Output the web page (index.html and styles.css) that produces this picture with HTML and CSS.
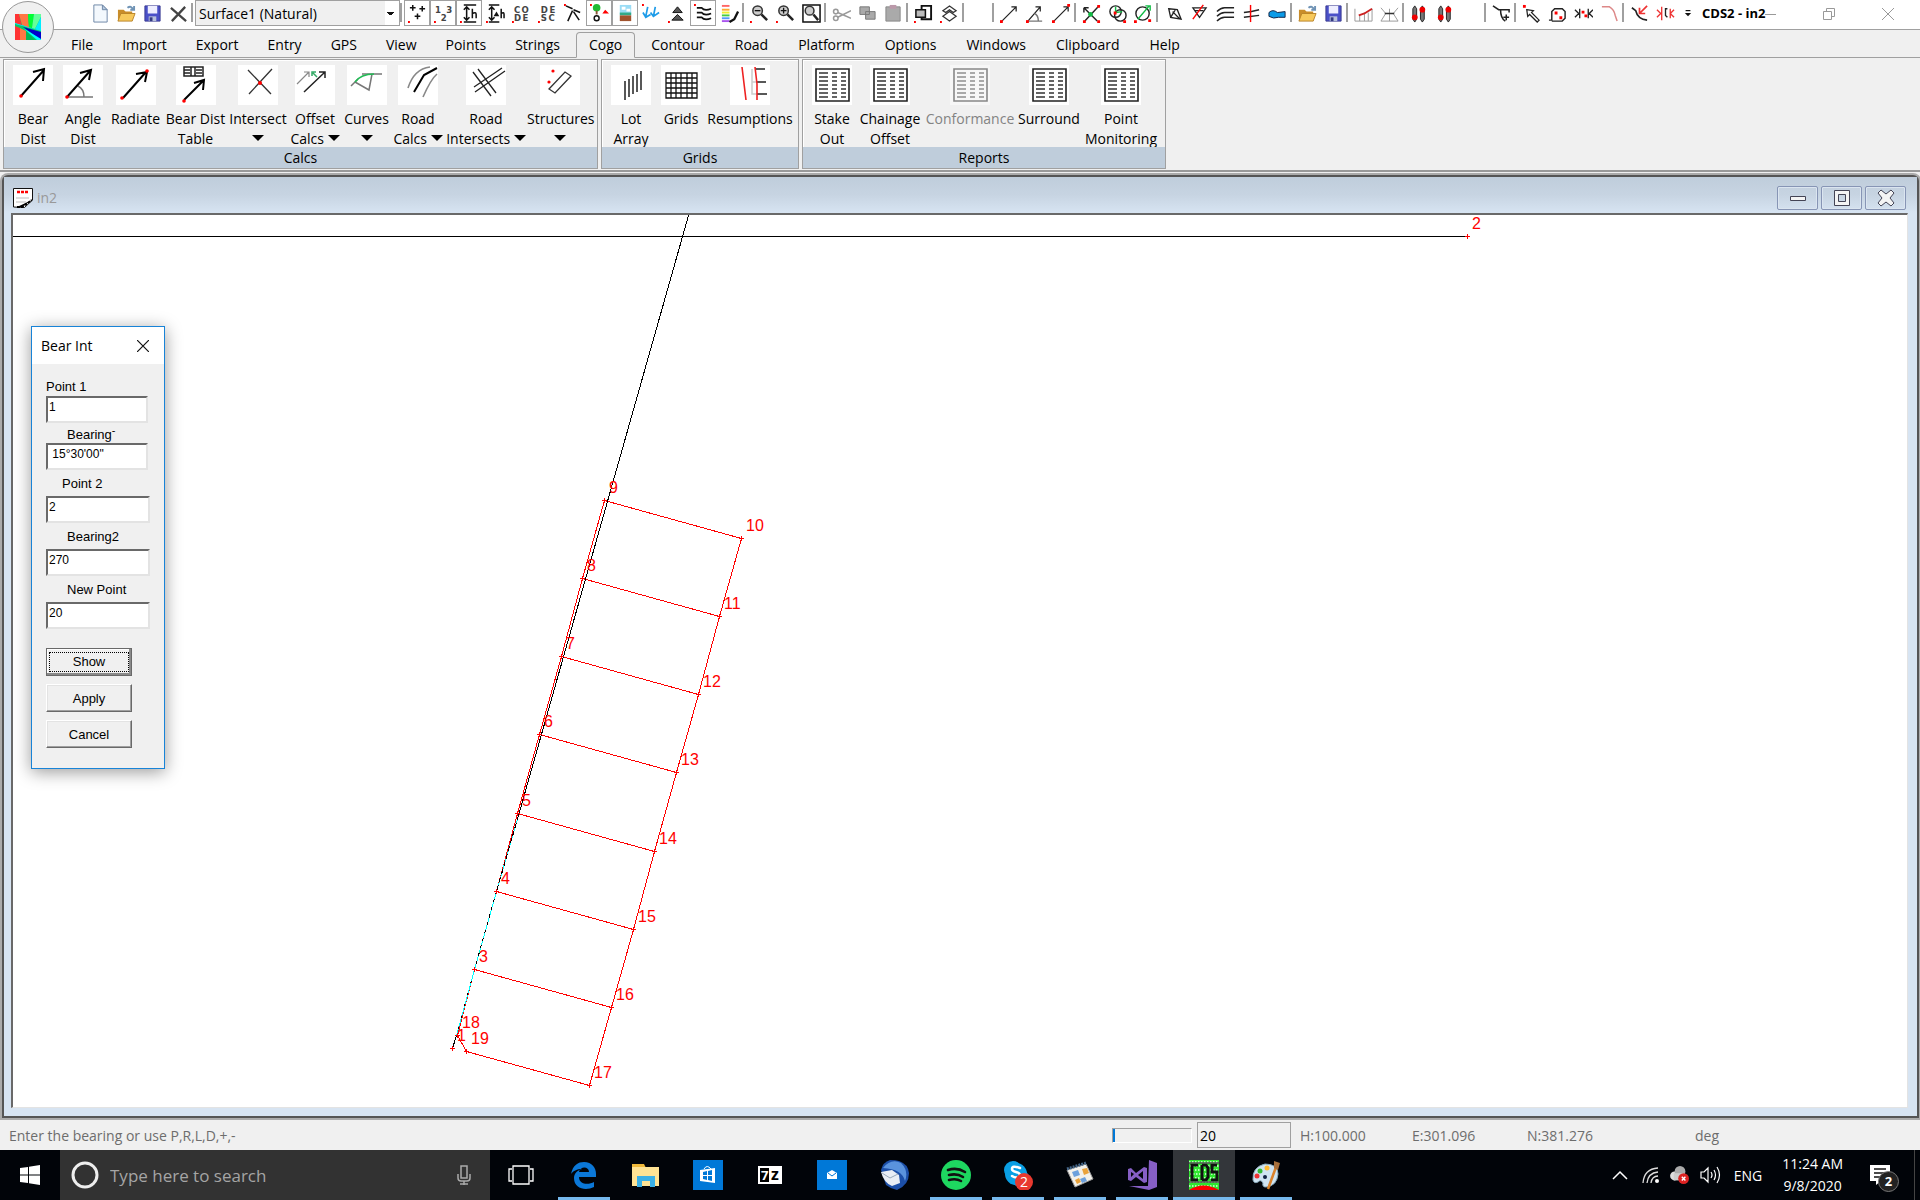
FILE: index.html
```
<!DOCTYPE html>
<html lang="en">
<head>
  <meta charset="UTF-8">
  <title>CDS2 - in2</title>
  <link rel="stylesheet" href="styles.css">
</head>
<body>

  <svg class="defs" aria-hidden="true">
    <symbol id="report" viewBox="0 0 40 40">
      <path fill="#fff" d="M0 0h40v40H0z"/>
      <path fill="none" stroke="#222" stroke-width="1.600" d="M4 4h33v32H4z"/>
      <path stroke="#333" stroke-width="1.400" stroke-dasharray="9 4 5 4 5 9" d="M7 8h29M7 12h29M7 16h29M7 20h29M7 24h29M7 28h29M7 32h29"/>
    </symbol>
    <symbol id="folder" viewBox="0 0 20 20">
      <path fill="#c98d2a" d="M1 6h6l2 2h7v10H1z"/>
      <path fill="#f7c95c" stroke="#b98428" d="M4 10h15l-3 8H1z"/>
      <path fill="none" stroke="#6f93b5" stroke-width="2" d="M11 4q4-3 6 2M14 6h4V2"/>
    </symbol>
    <symbol id="disk" viewBox="0 0 20 20">
      <path fill="#4a50c8" stroke="#3a3a90" d="M2 2h16v16H2z"/>
      <path fill="#eef" d="M5 2h10v8H5z"/>
      <path fill="#b8c0dc" d="M6 13h8v5H6z"/>
      <path fill="#333a80" d="M7 14h3v4H7z"/>
    </symbol>
    <symbol id="sliders" viewBox="0 0 20 20">
      <path fill="#777" stroke="#222" d="M5 2l2 3v11l-2 3-2-3V5zM13 2l2 3v11l-2 3-2-3V5z"/>
      <circle fill="#e00" cx="5" cy="14" r="3"/>
      <circle fill="#e00" cx="13" cy="6" r="3"/>
    </symbol>
  </svg>

  <header class="titlebar">
    <div class="toolbar">
      <button class="tb" aria-label="New"><svg viewBox="0 0 20 20"><path fill="#f3f8fd" stroke="#6d86a5" d="M3 1h9l5 5v13H3z"/><path fill="#b9cbe0" stroke="#6d86a5" d="M12 1v5h5z"/></svg></button>
      <button class="tb" aria-label="Open"><svg><use href="#folder"/></svg></button>
      <button class="tb" aria-label="Save"><svg><use href="#disk"/></svg></button>
      <button class="tb" aria-label="Delete"><svg viewBox="0 0 20 20"><path stroke="#444" stroke-width="2.4" d="M2 4l16 14M17 3L3 18"/></svg></button>
      <span class="sep"></span>
      <select class="surface" aria-label="Surface"><option>Surface1 (Natural)</option></select>
      <span class="sep"></span>
      <button class="tb on" aria-label="Points"><svg viewBox="0 0 20 20"><path stroke="#111" stroke-width="1.6" d="M5 1v6M2 4h6M15 2v6M12 5h6M10 10v6M7 13h6"/><path fill="red" d="M0 18h2v2H0z"/></svg></button>
      <button class="tb on" aria-label="Point numbers"><svg viewBox="0 0 20 20"><text x="1" y="9" class="tiny">1</text><text x="13" y="9" class="tiny">3</text><text x="7" y="18" class="tiny">2</text><path fill="red" d="M0 18h2v2H0z"/></svg></button>
      <button class="tb on" aria-label="Heights"><svg viewBox="0 0 20 20"><path fill="none" stroke="#111" stroke-width="1.6" d="M4 1h13M4 19h13M7 3v14M4 6l3-3 3 3M4 14l3 3 3-3M13 5v10M13 10q4-2 4 1v4"/><path fill="red" d="M0 18h2v2H0z"/></svg></button>
      <button class="tb" aria-label="Height difference"><svg viewBox="0 0 20 20"><path fill="none" stroke="#111" stroke-width="1.6" d="M3 1h11M3 19h11M6 3v14M3 6l3-3 3 3M3 14l3 3 3-3M16 5v10M16 10q3-2 3 1v4"/><path fill="#111" d="M8 13l3-5 3 5z"/><path fill="red" d="M0 18h2v2H0z"/></svg></button>
      <button class="tb" aria-label="Codes"><svg viewBox="0 0 20 20"><text x="2" y="9" class="tiny">C</text><text x="10" y="9" class="tiny">O</text><text x="2" y="18" class="tiny">D</text><text x="11" y="18" class="tiny">E</text><path fill="red" d="M0 18h2v2H0z"/></svg></button>
      <button class="tb" aria-label="Descriptions"><svg viewBox="0 0 20 20"><text x="3" y="9" class="tiny">D</text><text x="12" y="9" class="tiny">E</text><text x="3" y="18" class="tiny">S</text><text x="11" y="18" class="tiny">C</text><path fill="red" d="M0 18h2v2H0z"/></svg></button>
      <button class="tb" aria-label="Strings"><svg viewBox="0 0 20 20"><path fill="none" stroke="#111" stroke-width="1.6" d="M2 2l7 3M10 6l7 3M9 7L4 18M10 8l6 9"/><path fill="red" d="M0 0h2v2H0z"/></svg></button>
      <button class="tb on" aria-label="Symbols"><svg viewBox="0 0 20 20"><circle cx="7" cy="4" r="4" fill="#2b3"/><path stroke="#853" stroke-width="2" d="M7 7v4"/><path fill="red" d="M16 6l4 4h-7zM0 0h2v2H0z"/><circle cx="7" cy="15" r="2.6" fill="none" stroke="#111" stroke-width="1.5"/></svg></button>
      <button class="tb on" aria-label="Images"><svg viewBox="0 0 20 20"><path fill="#9adcf5" d="M4 1h12v10H4z"/><path fill="#fff" d="M6 3h4v3H6zM11 5h4v3h-4z"/><path fill="#3a8" d="M4 9h12v3H4z"/><path fill="#a0522d" d="M4 12h12v6H4z"/></svg></button>
      <button class="tb" aria-label="Drainage"><svg viewBox="0 0 20 20"><path fill="none" stroke="#1d9be8" stroke-width="1.8" d="M6 3l-2 10M1 9l3 5 5-3M14 3l-2 10M9 9l3 4 6-4"/><path fill="red" d="M0 0h2v2H0z"/></svg></button>
      <button class="tb" aria-label="Slopes"><svg viewBox="0 0 20 20"><path fill="#555" stroke="#111" d="M10 3l5 6H5zM10 11l6 6H4z"/><path fill="red" d="M0 18h2v2H0z"/></svg></button>
      <button class="tb on" aria-label="Contours"><svg viewBox="0 0 20 20"><path fill="none" stroke="#111" stroke-width="1.8" d="M3 4h5q3 4 10 1M3 9h5q3 4 10 1M3 14h5q3 4 10 1"/><path fill="red" d="M0 0h2v2H0z"/></svg></button>
      <button class="tb" aria-label="Colours"><svg viewBox="0 0 20 20"><path stroke="#f66" stroke-width="2" d="M2 2h8"/><path stroke="#fa3" stroke-width="2" d="M2 6h8"/><path stroke="#ee3" stroke-width="2" d="M2 9h8"/><path stroke="#4c4" stroke-width="2" d="M2 12h8"/><path stroke="#59f" stroke-width="2" d="M2 15h8"/><path stroke="#a5e" stroke-width="2" d="M2 18h8"/><path fill="none" stroke="#111" stroke-width="2.4" d="M19 8l-4 8-5 3"/></svg></button>
      <span class="sep"></span>
      <button class="tb" aria-label="Zoom out"><svg viewBox="0 0 20 20"><circle cx="8" cy="7" r="5" fill="#ccc" stroke="#333" stroke-width="1.6"/><path stroke="#222" stroke-width="2.6" d="M12 11l6 6"/><path stroke="#111" stroke-width="1.4" d="M5 7h6"/><path fill="red" d="M0 18h2v2H0z"/></svg></button>
      <button class="tb" aria-label="Zoom in"><svg viewBox="0 0 20 20"><circle cx="8" cy="7" r="5" fill="#ccc" stroke="#333" stroke-width="1.6"/><path stroke="#222" stroke-width="2.6" d="M12 11l6 6"/><path stroke="#111" stroke-width="1.4" d="M5 7h6M8 4v6"/><path fill="red" d="M0 18h2v2H0z"/></svg></button>
      <button class="tb" aria-label="Zoom window"><svg viewBox="0 0 20 20"><path fill="#fff" stroke="#111" stroke-width="1.6" d="M1 1h18v18H1z"/><circle cx="8" cy="7" r="4.6" fill="#ccc" stroke="#333" stroke-width="1.6"/><path stroke="#222" stroke-width="2.6" d="M12 11l5 6"/></svg></button>
      <span class="sep"></span>
      <button class="tb" aria-label="Cut"><svg viewBox="0 0 20 20"><path fill="none" stroke="#999" stroke-width="1.6" d="M20 7L6 14M20 15L6 9"/><circle cx="4" cy="8" r="2.4" fill="none" stroke="#999" stroke-width="1.6"/><circle cx="4" cy="15" r="2.4" fill="none" stroke="#999" stroke-width="1.6"/></svg></button>
      <button class="tb" aria-label="Copy"><svg viewBox="0 0 20 20"><path fill="#aaa" stroke="#777" d="M2 3h10v8H2zM8 8h10v8H8z"/></svg></button>
      <button class="tb" aria-label="Paste"><svg viewBox="0 0 20 20"><path fill="#aaa" stroke="#888" d="M2 3h15v15H2z"/><path fill="#b9a" d="M6 1h7v4H6z"/></svg></button>
      <span class="sep"></span>
      <button class="tb" aria-label="Bring to front"><svg viewBox="0 0 20 20"><path fill="none" stroke="#111" stroke-width="2" d="M8 2h10v14H8z"/><path fill="#bbb" stroke="#111" stroke-width="1.6" d="M2 6h10v8H2z"/><path fill="red" d="M0 18h2v2H0z"/></svg></button>
      <button class="tb" aria-label="Layers"><svg viewBox="0 0 20 20"><path fill="#fff" stroke="#333" stroke-width="1.3" d="M10 8l7 5-7 5-7-5zM10 2l7 5-3 2-4-3-4 3-3-2z"/><path fill="red" d="M0 18h2v2H0z"/></svg></button>
      <span class="sep"></span>
      <span class="spacer"></span>
      <span class="sep"></span>
      <button class="tb" aria-label="Bearing distance"><svg viewBox="0 0 20 20"><path fill="none" stroke="#222" stroke-width="1.3" d="M2 18L17 3M12 3h5v5"/><path fill="red" d="M0 17h3v3H0z"/></svg></button>
      <button class="tb" aria-label="Angle distance"><svg viewBox="0 0 20 20"><path fill="none" stroke="#222" stroke-width="1.3" d="M2 18L15 3M10 3h5v5"/><path fill="none" stroke="#777" stroke-width="1.5" d="M2 18h15M9 10q4 2 4 8"/><path fill="red" d="M0 17h3v3H0z"/></svg></button>
      <button class="tb" aria-label="Radiate"><svg viewBox="0 0 20 20"><path fill="none" stroke="#222" stroke-width="1.3" d="M2 18L17 3M12 3h5v5"/><path fill="red" d="M0 17h3v3H0zM16 0h3v3h-3z"/></svg></button>
      <span class="sep"></span>
      <button class="tb" aria-label="Line intersection"><svg viewBox="0 0 20 20"><path stroke="#222" stroke-width="1.5" d="M3 18L17 3M2 4l14 14M2 4h5M2 4v5"/><path fill="red" d="M16 1h3v3h-3zM16 17h3v3h-3zM1 17h3v3H1z"/><circle cx="9" cy="11" r="2.5" fill="#1b4"/></svg></button>
      <button class="tb" aria-label="Circle intersection"><svg viewBox="0 0 20 20"><g fill="none" stroke="#222" stroke-width="1.5"><circle cx="8" cy="8" r="6"/><circle cx="13" cy="12" r="6"/></g><path stroke="#1b4" stroke-width="1.5" d="M8 9V3M8 9l7-1"/><path fill="red" d="M6 8h3v3H6zM16 17h3v3h-3z"/></svg></button>
      <button class="tb" aria-label="Line circle intersection"><svg viewBox="0 0 20 20"><circle cx="9" cy="10" r="7" fill="none" stroke="#222" stroke-width="1.5"/><path fill="none" stroke="#1b4" stroke-width="1.5" d="M4 16L16 2M12 2h5v5"/><path fill="red" d="M0 17h3v3H0zM15 16h3v3h-3z"/></svg></button>
      <span class="sep"></span>
      <button class="tb" aria-label="Parcel"><svg viewBox="0 0 20 20"><path fill="none" stroke="#222" stroke-width="1.4" d="M5 5l9 1 4 10-11-2zM7 14l5-8M9 8l8 8"/></svg></button>
      <button class="tb" aria-label="Remove parcel"><svg viewBox="0 0 20 20"><path fill="none" stroke="#222" stroke-width="1.3" d="M3 4h14l-7 10zM5 7h9"/><path stroke="red" stroke-width="1.5" d="M3 16L14 1"/></svg></button>
      <button class="tb" aria-label="Offsets"><svg viewBox="0 0 20 20"><path fill="none" stroke="#222" stroke-width="1.5" d="M1 8q4-4 8-4h10M1 13q4-4 8-4h10M1 18q4-4 8-4h10"/></svg></button>
      <button class="tb" aria-label="Intersect roads"><svg viewBox="0 0 20 20"><path fill="none" stroke="#222" stroke-width="1.5" d="M2 9q8-1 16-3M2 14q8-1 16-2"/><path stroke="red" stroke-width="1.5" d="M9 1v18"/></svg></button>
      <button class="tb" aria-label="Pond"><svg viewBox="0 0 20 20"><path fill="#0b9be8" stroke="#124" d="M1 9q4-4 9 0l8-1v6l-7 0q-5 2-10-1z"/></svg></button>
      <span class="sep"></span>
      <button class="tb" aria-label="Open set"><svg><use href="#folder"/></svg></button>
      <button class="tb" aria-label="Save set"><svg><use href="#disk"/></svg></button>
      <span class="sep"></span>
      <button class="tb" aria-label="Long section"><svg viewBox="0 0 20 20"><path fill="none" stroke="#999" d="M1 5v13h18V5M6 18v-6M11 18V9M15 18V9"/><path fill="none" stroke="#c22" stroke-width="2" d="M5 12l6-2 8-5"/></svg></button>
      <button class="tb" aria-label="Cross section"><svg viewBox="0 0 20 20"><path fill="none" stroke="#999" d="M1 4l5 6-5 8h18l-5-8 5-6M10 5v13"/><path stroke="#333" stroke-width="1.6" d="M5 10h10"/></svg></button>
      <span class="sep"></span>
      <button class="tb" aria-label="Shift"><svg><use href="#sliders"/></svg></button>
      <button class="tb" aria-label="Shift all"><svg><use href="#sliders"/></svg></button>
      <span class="spacer"></span>
      <span class="sep"></span>
      <button class="tb" aria-label="Extend"><svg viewBox="0 0 20 20"><path fill="none" stroke="#222" stroke-width="1.6" d="M1 2l6 4h11v3M9 6q0 9 5 12M15 11v6M12 14h6"/></svg></button>
      <span class="sep"></span>
      <button class="tb" aria-label="Pick string"><svg viewBox="0 0 20 20"><path fill="none" stroke="#222" stroke-width="1.3" d="M5 6l7 1-2 2 8 8-2 2-8-8-2 2z"/><path fill="red" d="M1 1h3v3H1z"/></svg></button>
      <button class="tb" aria-label="Join"><svg viewBox="0 0 20 20"><path fill="none" stroke="#222" stroke-width="1.5" d="M1 17h3V8l3-3h8l3 3v7l-3 3H4"/><path fill="red" d="M7 8h3v3H7zM12 13h3v3h-3z"/></svg></button>
      <button class="tb" aria-label="Break"><svg viewBox="0 0 20 20"><path fill="none" stroke="#222" stroke-width="1.4" d="M1 6l4 4-4 4M6 5v10M15 5v10M20 6l-4 4 4 4"/><path fill="red" d="M8 7h3v3H8zM11 11h3v3h-3z"/></svg></button>
      <button class="tb" aria-label="Curve"><svg viewBox="0 0 20 20"><path fill="none" stroke="#d88" stroke-width="1.6" d="M2 3h8q5 3 6 9l2 6"/></svg></button>
      <span class="sep"></span>
      <button class="tb" aria-label="Snap"><svg viewBox="0 0 20 20"><path fill="none" stroke="#222" stroke-width="1.8" d="M2 4l4 3q2 9 12 10"/><path fill="none" stroke="#e33" stroke-width="1.8" d="M18 2l-8 8M10 4v6h6"/></svg></button>
      <button class="tb" aria-label="Split"><svg viewBox="0 0 20 20"><path fill="none" stroke="#e33" stroke-width="1.4" d="M1 6l4 4-4 4M6 3v14M15 5v10M19 6l-4 4 4 4"/><path fill="none" stroke="#222" stroke-width="1.4" d="M12 5h-2v7l2 2"/></svg></button>
      <button class="more" aria-label="More tools"><svg viewBox="0 0 10 10"><path stroke="#111" stroke-width="1.5" d="M2 2h6"/><path fill="#111" d="M1 5h8l-4 4z"/></svg></button>
    </div>
    <strong class="title"><span>CDS2 - in2</span></strong>
    <div class="window-buttons">
      <button aria-label="Minimise"><svg viewBox="0 0 12 12"><path stroke="#999" d="M0 6.500h12"/></svg></button>
      <button aria-label="Restore"><svg viewBox="0 0 12 12"><path fill="none" stroke="#999" d="M.5 3.500h8v8h-8zM3.500 3V.5h8v8H9"/></svg></button>
      <button aria-label="Close"><svg viewBox="0 0 12 12"><path stroke="#999" d="M0 0l12 12M12 0L0 12"/></svg></button>
    </div>
  </header>

  <button class="app-button" aria-label="Application menu">
    <svg viewBox="0 0 26 26">
      <path fill="#0c6" d="M0 0h26v26H0z"/>
      <path fill="#f33" d="M0 0h4l3 12-7-3z"/>
      <path fill="#f74" d="M4 0h9l1 14-7-3z"/>
      <path fill="#0f3" d="M13 0h6l-2 14-3-1z"/>
      <path fill="#6f9" d="M19 0h7v3l-6 12-3-1z"/>
      <path fill="#0ef" d="M26 3v14L0 10v-1l20 6z"/>
      <path fill="#00c" d="M8 13l18 5v8z"/>
      <path fill="#0ff" d="M8 14l18 11v1h-4z"/>
      <path fill="#f33" d="M0 12l5 2v12H0z"/>
      <path fill="#f74" d="M5 14l6 3v9H5z"/>
      <path fill="#0b5" d="M11 17l9 9h-9z"/>
    </svg>
  </button>

  <nav class="tabs">
    <button>File</button>
    <button>Import</button>
    <button>Export</button>
    <button>Entry</button>
    <button>GPS</button>
    <button>View</button>
    <button>Points</button>
    <button>Strings</button>
    <button class="active">Cogo</button>
    <button>Contour</button>
    <button>Road</button>
    <button>Platform</button>
    <button>Options</button>
    <button>Windows</button>
    <button>Clipboard</button>
    <button>Help</button>
  </nav>

  <section class="ribbon">
    <div class="group">
      <div class="tools calcs">
        <button><svg viewBox="0 0 40 40"><path fill="#fff" d="M0 0h40v40H0z"/><path fill="none" stroke="#000" stroke-width="2" d="M8 31L31 5M20 7l11-3-1 12"/><circle cx="8" cy="31" r="1.800" fill="red"/></svg>Bear<br>Dist</button>
        <button><svg viewBox="0 0 40 40"><path fill="#fff" d="M0 0h40v40H0z"/><path fill="none" stroke="#777" stroke-width="1.500" d="M4 32h26M15 21q6 3 6 11"/><path fill="none" stroke="#000" stroke-width="2" d="M4 32L27 6M17 8l11-3-2 10"/><circle cx="4" cy="32" r="1.800" fill="red"/></svg>Angle<br>Dist</button>
        <button><svg viewBox="0 0 40 40"><path fill="#fff" d="M0 0h40v40H0z"/><path fill="none" stroke="#000" stroke-width="2" d="M7 33L30 7M20 9l11-2-2 10"/><circle cx="6" cy="33" r="1.800" fill="red"/><circle cx="31" cy="6" r="1.800" fill="red"/></svg>Radiate</button>
        <button><svg viewBox="0 0 40 40"><path fill="#fff" d="M0 0h40v40H0z"/><path fill="none" stroke="#222" stroke-width="1.500" d="M8 2h19v9H8zM8 5h6M8 8h6M20 5h6M20 8h6M15 2v9M19 2v9"/><path fill="none" stroke="#000" stroke-width="2" d="M8 35l19-19M18 18l10-3-1 10"/><circle cx="8" cy="36" r="1.800" fill="red"/></svg>Bear Dist<br>Table</button>
        <button><svg viewBox="0 0 40 40"><path fill="#fff" d="M0 0h40v40H0z"/><path stroke="#333" stroke-width="1.300" d="M10 5l23 24M34 4L11 29"/><circle cx="22" cy="18" r="2" fill="red"/></svg>Intersect<br><i class="drop"></i></button>
        <button><svg viewBox="0 0 40 40"><path fill="#fff" d="M0 0h40v40H0z"/><path fill="none" stroke="#888" stroke-width="1.200" d="M2 19L14 7M9 7h5v5"/><path fill="none" stroke="#222" stroke-width="1.500" d="M9 27L30 7M24 7h6v6"/><path fill="none" stroke="#3a6" stroke-width="1.500" d="M22 12l-4-4M17 11V7h4"/></svg>Offset<br>Calcs <i class="drop"></i></button>
        <button><svg viewBox="0 0 40 40"><path fill="#fff" d="M0 0h40v40H0z"/><path fill="none" stroke="#777" stroke-width="1.500" d="M15 9h20M4 21l7-7M8 17l14 8 3-16"/><path fill="none" stroke="#2b5" stroke-width="1.500" d="M8 17q6-8 19-8"/></svg>Curves<br><i class="drop"></i></button>
        <button><svg viewBox="0 0 40 40"><path fill="#fff" d="M0 0h40v40H0z"/><path fill="none" stroke="#888" stroke-width="1.600" d="M10 23Q16 4 32 2M25 32q8-18 14-23"/><path fill="none" stroke="#000" stroke-width="2" d="M16 27l10-17 13-7"/></svg>Road<br>Calcs <i class="drop"></i></button>
        <button><svg viewBox="0 0 40 40"><path fill="#fff" d="M0 0h40v40H0z"/><path stroke="#222" stroke-width="1.300" d="M8 22L36 3M9 27L39 6M7 7l18 24M12 4l18 24"/></svg>Road<br>Intersects <i class="drop"></i></button>
        <button><svg viewBox="0 0 40 40"><path fill="#fff" d="M0 0h40v40H0z"/><path fill="none" stroke="#333" stroke-width="1.300" d="M9 24L25 7l6 4-16 17z"/><circle cx="13" cy="6" r="1.600" fill="red"/><circle cx="9" cy="17" r="1.600" fill="red"/></svg>Structures<br><i class="drop"></i></button>
      </div>
      <div class="group-name">Calcs</div>
    </div>

    <div class="group">
      <div class="tools grids">
        <button><svg viewBox="0 0 40 40"><path fill="#fff" d="M0 0h40v40H0z"/><path stroke="#222" stroke-width="1.500" d="M14 16v19M18 14v18M22 11v18M26 9v18M30 6v19"/></svg>Lot<br>Array</button>
        <button><svg viewBox="0 0 40 40"><path fill="#fff" d="M0 0h40v40H0z"/><path fill="none" stroke="#111" stroke-width="1.300" d="M5 8h31v25H5zM5 13h31M5 18h31M5 23h31M5 28h31M10 8v25M15 8v25M20 8v25M26 8v25M31 8v25"/></svg>Grids</button>
        <button><svg viewBox="0 0 40 40"><path fill="#fff" d="M0 0h40v40H0z"/><path fill="none" stroke="#ccc" stroke-width="1.500" d="M22 4v25h5M22 17h5"/><path fill="none" stroke="#222" stroke-width="1.600" d="M25 4h10M27 17h9M27 29h10"/><path fill="none" stroke="#e22" stroke-width="1.600" d="M12 2l4 33M25 2l2 17v16"/></svg>Resumptions</button>
      </div>
      <div class="group-name">Grids</div>
    </div>

    <div class="group">
      <div class="tools reports">
        <button><svg><use href="#report"/></svg>Stake<br>Out</button>
        <button><svg><use href="#report"/></svg>Chainage<br>Offset</button>
        <button disabled><svg><use href="#report"/></svg>Conformance</button>
        <button><svg><use href="#report"/></svg>Surround</button>
        <button><svg><use href="#report"/></svg>Point<br>Monitoring</button>
      </div>
      <div class="group-name">Reports</div>
    </div>
  </section>

  <main class="mdi">
    <div class="child-title">
      <svg class="doc-icon" viewBox="0 0 20 20"><path fill="#fff" stroke="#111" d="M.5 19V.5h19V12l-8 7.500z"/><path stroke="red" stroke-width="2.500" stroke-dasharray="3 1" d="M4 4h12"/><path stroke="#bbb" d="M3 10h13M3 14h10"/><path stroke="#000" stroke-width="2" stroke-dasharray="3 1" d="M4 19h5l10-7"/></svg>
      <span>in2</span>
      <div class="child-buttons">
        <button aria-label="Minimise drawing"><svg viewBox="0 0 18 18"><path fill="#f4f4f4" stroke="#445" d="M1.500 7.500h15v4h-15z"/></svg></button>
        <button aria-label="Maximise drawing"><svg viewBox="0 0 18 18"><path fill="#f4f4f4" fill-rule="evenodd" stroke="#445" d="M1.500 1.500h15v15h-15zM5.500 5.500h7v7h-7z"/></svg></button>
        <button aria-label="Close drawing"><svg viewBox="0 0 18 18"><path fill="#f4f4f4" stroke="#445" d="M1 4l3-3 5 4 5-4 3 3-4 5 4 5-3 3-5-4-5 4-3-3 4-5z"/></svg></button>
      </div>
    </div>

    <div class="drawing">
      <svg class="plan" id="plan">
        <g transform="translate(-13 -215)">
          <path class="red" d="M457.500 1035.500L474.500 969.500 496.500 891.500 517.500 813.500 539.500 734.500 561.500 656.500 582.500 578.500 604.500 500.500 741.500 538.500 719.500 616.500 698.500 694.500 676.500 772.500 654.500 851.500 633.500 929.500 611.500 1007.500 589.500 1085.500 466.500 1051.500z"/>
          <path class="red" d="M582.500 578.500l137 38M561.500 656.500l137 38M539.500 734.500l137 38M517.500 813.500l137 38M496.500 891.500l137 38M474.500 969.500l137 38"/>
          <path class="black" d="M688.500 215.500L518.500 815.500M456.500 1035.500L452.500 1048.500M13 236.500h1453"/>
          <path class="cyan" d="M518.500 815.500L496.500 891.500 474.500 969.500 456.500 1035.500"/>
          <path class="black dashes" d="M518.500 815.500L496.500 891.500"/>
          <path class="black dots" d="M496.500 891.500L474.500 969.500"/>
          <path class="black sparse" d="M474.500 969.500L456.500 1035.500"/>
        </g>
      </svg>

      <form class="dialog">
        <div class="dialog-title">
          <span>Bear Int</span>
          <button type="button" aria-label="Close dialog"><svg viewBox="0 0 12 12"><path stroke="#111" stroke-width="1.200" d="M0 0l12 12M12 0L0 12"/></svg></button>
        </div>
        <div class="dialog-body">
          <label for="point1">Point 1</label>
          <input id="point1" type="text" value="1">
          <label class="second indent" for="bearing1">Bearing<sup>-</sup></label>
          <input id="bearing1" type="text" value=" 15°30'00&quot;">
          <label class="tall half" for="point2">Point 2</label>
          <input class="wide" id="point2" type="text" value="2">
          <label class="tall indent" for="bearing2">Bearing2</label>
          <input class="wide" id="bearing2" type="text" value="270">
          <label class="tall indent" for="newpoint">New Point</label>
          <input class="wide" id="newpoint" type="text" value="20">
          <div class="dialog-buttons">
            <button type="button" class="default"><span>Show</span></button>
            <button type="button">Apply</button>
            <button type="button">Cancel</button>
          </div>
        </div>
      </form>
    </div>
  </main>

  <footer class="status">
    <span class="hint">Enter the bearing or use P,R,L,D,+,-</span>
    <div class="progress"></div>
    <input type="text" value="20" aria-label="Next point">
    <span class="height">H:100.000</span>
    <span class="east">E:301.096</span>
    <span class="north">N:381.276</span>
    <span class="units">deg</span>
  </footer>

  <div class="taskbar">
    <button class="start" aria-label="Start"><svg viewBox="0 0 20 20"><path fill="#fff" d="M0 3l8-1v7.500H0zM9 1.800L20 0v9.500H9zM0 10.500h8V18l-8-1zM9 10.500h11V20L9 18.200z"/></svg></button>
    <div class="search">
      <svg class="cortana" viewBox="0 0 28 28"><circle cx="14" cy="14" r="12" fill="none" stroke="#eee" stroke-width="3"/></svg>
      <input type="text" placeholder="Type here to search" aria-label="Search">
      <svg class="mic" viewBox="0 0 16 20"><path fill="none" stroke="#aaa" stroke-width="1.500" d="M5 1h6v12H5zM2 9v4q0 3 3 3h6q3 0 3-3V9M8 16v4M4 19h8"/></svg>
    </div>
    <button class="task view" aria-label="Task view"><svg viewBox="0 0 30 30"><path fill="none" stroke="#fff" stroke-width="1.300" d="M7 6h16v18H7zM6 9H3v12h3M24 9h3v12h-3"/></svg></button>
    <button class="task open" aria-label="Edge"><svg viewBox="0 0 30 30"><path fill="#0b78d8" d="M2 14C4 5 9 2 15 2c8 0 12 6 12 12v3H10c0 8 10 8 15 5v5c-8 4-20 2-20-9 0-5 4-8 8-9-5 0-9 2-11 5zM10 12h10c0-6-9-6-10 0z"/></svg></button>
    <button class="task" aria-label="Explorer"><svg viewBox="0 0 30 30"><path fill="#f0b93a" d="M1 4h12l2 4H1z"/><path fill="#ffe394" d="M1 7h27v19H1z"/><path fill="#3bb0e6" d="M6 16h18v11h-5v-6h-8v6H6z"/></svg></button>
    <button class="task" aria-label="Store"><svg viewBox="0 0 30 30"><path fill="#0078d7" d="M0 0h30v30H0z"/><path fill="#fff" d="M7 10l15-2v15L7 21z"/><path fill="none" stroke="#fff" d="M11 9q3-5 7 0"/><path fill="#0078d7" d="M10 12l4-1v4h-4zM15 11l4-1v5h-4zM10 16h4v4l-4-1zM15 16h4v5l-4-1z"/></svg></button>
    <button class="task" aria-label="7-Zip"><svg viewBox="0 0 30 30"><path fill="#fff" d="M3 6h24v18H3z"/><path fill="#000" d="M5 8h9v14H5z"/><text x="6" y="20" class="seven">7</text><text x="16" y="20" class="zed">z</text></svg></button>
    <button class="task" aria-label="Mail"><svg viewBox="0 0 30 30"><path fill="#0078d7" d="M0 0h30v30H0z"/><path fill="#fff" d="M10 13l5-3 5 3v6H10z"/><path fill="none" stroke="#0078d7" d="M11 13l4 3 4-3"/></svg></button>
    <button class="task" aria-label="Thunderbird"><svg viewBox="0 0 30 30"><path fill="#1c4fa8" d="M2 10Q4 2 11 0q6 0 9 1 9 3 10 12 0 12-12 17-6-1-11-5z"/><path fill="#5a93dd" d="M4 8q8-10 18-5 8 8 4 18-3-12-22-13z"/><path fill="#e9eef5" d="M2 12l11-2 7 5 1 8-8 3q-8-3-11-14z"/><path fill="none" stroke="#9ab" d="M3 13l8 5 8-4"/></svg></button>
    <button class="task open" aria-label="Spotify"><svg viewBox="0 0 30 30"><circle cx="15" cy="15" r="15" fill="#1ed760"/><path fill="none" stroke="#111" stroke-width="2.600" stroke-linecap="round" d="M7 10q9-3 17 2M8 15q8-2 14 2M8 20q7-2 12 1"/></svg></button>
    <button class="task open" aria-label="Skype"><svg viewBox="0 0 30 30"><circle cx="10" cy="10" r="9" fill="#0a9fe4"/><circle cx="17" cy="18" r="9" fill="#0a9fe4"/><circle cx="13" cy="14" r="11" fill="#0a9fe4"/><path fill="none" stroke="#fff" stroke-width="2.500" stroke-linecap="round" d="M17 8q-8-3-8 1c0 4 8 2 8 6 0 3-5 3-8 1"/><circle cx="21" cy="22" r="9" fill="#e8392f"/><text x="17" y="27" class="badge">2</text></svg></button>
    <button class="task open" aria-label="Notes"><svg viewBox="0 0 30 30"><path fill="#f2f0ea" stroke="#999" d="M2 10l19-6 7 15-18 8z"/><path stroke="#468" stroke-width="3" stroke-dasharray="2 1" d="M2 9l19-6"/><path fill="#6ca0dc" d="M7 12l6-2 2 5-6 2zM15 19l5-2 2 4-5 2z"/><path fill="#e9a23b" d="M17 9l5-1 2 5-5 2zM10 20l4-2 2 4-4 2z"/></svg></button>
    <button class="task open" aria-label="Visual Studio"><svg viewBox="0 0 30 30"><path fill="#865fc5" fill-rule="evenodd" d="M22 0l8 3v24l-8 3L2 26l19 0zM1 9l3-1 5 5 8-6 3 1v14l-3 1-8-6-5 4-3-1zM4 12v5l3-3zM16 11l-5 4 5 4z"/></svg></button>
    <button class="task open current" aria-label="CDS"><svg viewBox="0 0 30 30"><path fill="#2ee62e" d="M0 0h30v30H0z"/><path stroke="#dfd" stroke-width="1.500" stroke-dasharray="1.500 1.500" d="M0 2h30M1 6h30M0 10h30M1 14h30M0 18h30M1 22h30M0 26h30"/><path fill="none" stroke="#111" stroke-width="3" d="M9 5H3v15h6M13 5v15M13 5h4l2 3v9l-2 3h-4M28 5h-5v7h5v8h-6"/><path fill="none" stroke="#555" stroke-width="1.500" d="M0 3h30M0 22h30"/><path fill="red" d="M0 30q14-9 30 0z"/></svg></button>
    <button class="task open" aria-label="Paint"><svg viewBox="0 0 30 30"><path fill="#cfe4f2" stroke="#8ab" d="M2 20Q1 7 14 4q13 0 13 10-1 12-12 13-4 0-3-4-2-4-5-1-4 2-5-2z"/><circle cx="9" cy="11" r="2.500" fill="#3b3"/><circle cx="16" cy="8" r="2.500" fill="#fb3"/><circle cx="6" cy="16" r="2.500" fill="#e33"/><circle cx="14" cy="17" r="2" fill="#124"/><path stroke="#d9822b" stroke-width="2.500" d="M17 29l8-22"/><path fill="#a8703c" d="M23 1l6 2-2 7-4-2z"/></svg></button>
    <div class="tray">
      <svg class="up" viewBox="0 0 16 10"><path fill="none" stroke="#fff" stroke-width="1.500" d="M1 9l7-7 7 7"/></svg>
      <svg viewBox="0 0 18 18"><path fill="none" stroke="#ddd" stroke-width="1.300" d="M1 17Q2 3 16 2M5 17Q6 7 16 6M9 17q1-7 7-7"/><circle cx="15" cy="15" r="2" fill="#fff"/></svg>
      <svg class="cloud" viewBox="0 0 22 20"><circle cx="5" cy="11" r="5" fill="#ddd"/><circle cx="11" cy="6" r="6" fill="#aaa"/><path fill="#ccc" d="M4 8h12v8H4z"/><circle cx="15" cy="14" r="6" fill="#d22"/><path stroke="#fff" stroke-width="1.600" d="M13 12l4 4M17 12l-4 4"/></svg>
      <svg class="volume" viewBox="0 0 22 18"><path fill="none" stroke="#fff" stroke-width="1.200" d="M1 6h3l4-4v14l-4-4H1zM11 6q2 3 0 6M14 4q3 5 0 10M17 1q5 8 0 16"/></svg>
      <span class="lang">ENG</span>
      <div class="clock">11:24 AM<br>9/8/2020</div>
      <div class="notices">
        <svg viewBox="0 0 22 22"><path fill="#fff" d="M1 1h20v16h-9l-5 4v-4H1z"/><path stroke="#111" stroke-width="1.500" d="M5 5h12M5 9h12M5 13h8"/></svg>
        <b>2</b>
      </div>
    </div>
  </div>

  <script>
    // survey points: number, x, y
    const points = [
      [1, 452, 1048], [2, 1467, 236], [3, 474, 969], [4, 496, 891], [5, 517, 813],
      [6, 539, 734], [7, 561, 656], [8, 582, 578], [9, 604, 500], [10, 741, 538],
      [11, 719, 616], [12, 698, 694], [13, 676, 772], [14, 654, 851], [15, 633, 929],
      [16, 611, 1007], [17, 589, 1085], [18, 457, 1035], [19, 466, 1051]
    ];
    const layer = document.querySelector("#plan g");

    points.forEach(([name, x, y]) => {
      const cross = document.createElementNS("http://www.w3.org/2000/svg", "path");
      cross.setAttribute("class", "red");
      cross.setAttribute("d", `M${x - 2} ${y + 0.5}h5M${x + 0.5} ${y - 2}v5`);
      layer.appendChild(cross);

      const label = document.createElementNS("http://www.w3.org/2000/svg", "text");
      label.setAttribute("x", x + 5);
      label.setAttribute("y", y - 7);
      label.textContent = name;
      layer.appendChild(label);
    });
  </script>
</body>
</html>
```
FILE: styles.css
```
* {
  box-sizing: border-box;
}

body {
  margin: 0;
  height: 100vh;
  display: flex;
  flex-direction: column;
  overflow: hidden;
  background: #f0f0f0;
  color: #000;
  font-family: "Open Sans", "Noto Sans", sans-serif;
  font-size: 14px;
}

button {
  font: inherit;
  color: inherit;
  background: none;
  border: none;
  padding: 0;
}

svg {
  display: block;
}

.defs {
  display: none;
}

/* title bar */
.titlebar {
  display: flex;
  height: 30px;
  padding-left: 87px;
  background: #fff;
  border-bottom: 1px solid #a0a0a0;
}

.toolbar {
  display: flex;
  flex: none;
  height: 26px;
}

.tb {
  display: flex;
  flex: none;
  align-items: center;
  justify-content: center;
  width: 26px;
  height: 26px;
}

.tb svg {
  width: 19px;
  height: 19px;
}

.tb.on {
  border: 1px solid #a0a0a0;
}

.tiny {
  font: bold 9px "DejaVu Sans", sans-serif;
  fill: #444;
}

.sep {
  width: 4px;
  height: 19px;
  margin-top: 3px;
  border-left: 2px solid #a0a0a0;
}

.spacer {
  width: 26px;
}

.surface {
  width: 205px;
  height: 26px;
  padding: 0 0 0 3px;
  border: 1px solid #a0a0a0;
  color: #000;
  font: inherit;
  appearance: none;
  background:
    linear-gradient(#111, #111) right 5px top 11px / 7px 1px no-repeat,
    linear-gradient(#111, #111) right 6px top 12px / 5px 1px no-repeat,
    linear-gradient(#111, #111) right 7px top 13px / 3px 1px no-repeat,
    linear-gradient(#fff, #fff) right / 14px 100% no-repeat,
    #f0f0f0;
}

.more {
  width: 20px;
  height: 26px;
}

.more svg {
  width: 8px;
  margin: auto;
}

.title {
  flex: 1;
  min-width: 0;
  position: relative;
  padding-left: 4px;
  font-size: 13px;
  line-height: 26px;
  white-space: nowrap;
}

.title span {
  background: #fff;
}

.window-buttons {
  display: flex;
  height: 28px;
  margin-right: 3px;
}

.window-buttons button {
  width: 59px;
}

.window-buttons svg {
  width: 12px;
  height: 12px;
  margin: auto;
}

.app-button {
  position: absolute;
  left: 2px;
  top: 1px;
  width: 52px;
  height: 52px;
  border: 1px solid #999;
  border-radius: 50%;
  background: #f0f0f0;
  z-index: 2;
}

.app-button svg {
  width: 26px;
  height: 26px;
  margin: auto;
}

/* menu tabs */
.tabs {
  display: flex;
  align-items: flex-end;
  gap: 3px;
  height: 28px;
  padding-left: 58px;
  border-bottom: 1px solid #a0a0a0;
}

.tabs button {
  height: 26px;
  margin-bottom: -1px;
  padding: 0 12px;
  border: 1px solid transparent;
  line-height: 24px;
}

.tabs .active {
  border-color: #a0a0a0;
  border-bottom-color: #f0f0f0;
  border-radius: 4px 4px 0 0;
}

.tabs .active ~ button {
  padding-right: 13px;
}

/* ribbon */
.ribbon {
  display: flex;
  gap: 3px;
  height: 114px;
  padding: 1px 3px 0;
  border-bottom: 2px solid #999;
}

.group {
  height: 110px;
  border: 1px solid #a0a0a0;
  box-shadow: inset 1px 1px #fff;
}

.tools {
  display: grid;
  align-items: start;
  height: 87px;
  padding: 5px 4px 0;
  overflow: hidden;
}

.calcs {
  grid-template-columns: 50px 50px 55px 65px 60px 54px 49px 54px 82px 66px;
}

.grids {
  grid-template-columns: 50px 50px 88px;
}

.reports {
  grid-template-columns: 50px 66px 94px 64px 80px;
}

.tools button {
  line-height: 20px;
  text-align: center;
  white-space: nowrap;
}

.tools button:disabled {
  color: #838383;
}

.tools button:disabled svg {
  opacity: 0.5;
}

.tools svg {
  width: 40px;
  height: 40px;
  margin: 0 auto 4px;
}

.drop {
  display: inline-block;
  border: 6px solid transparent;
  border-top-color: #000;
  border-bottom: none;
  vertical-align: 3px;
}

.group-name {
  height: 21px;
  background: #bfcddb;
  line-height: 22px;
  text-align: center;
}

/* drawing window */
.mdi {
  flex: 1;
  display: flex;
  flex-direction: column;
  min-height: 0;
  margin: 3px 1px 2px 2px;
  padding: 0 9px 8px 7px;
  background: #d7e4f2;
  border: 2px solid #555;
  border-radius: 6px 6px 0 0;
  box-shadow: 0 0 0 2px #ababab;
}

.child-title {
  display: flex;
  align-items: center;
  flex: none;
  height: 36px;
  margin: 0 -9px 0 -7px;
  padding: 5px 11px 0 9px;
  background: linear-gradient(#bfcddb, #c7d4e2 50%, #d7e4f2);
  color: #999;
}

.doc-icon {
  width: 20px;
  height: 20px;
  margin-right: 4px;
}

.child-buttons {
  display: flex;
  gap: 3px;
  margin-left: auto;
}

.child-buttons button {
  width: 41px;
  height: 24px;
  border: 1px solid #8795b5;
  border-radius: 2px;
  box-shadow: inset 0 0 0 1px #dbe5f0;
}

.child-buttons svg {
  width: 18px;
  height: 18px;
  margin: auto;
}

.drawing {
  flex: 1;
  position: relative;
  min-height: 0;
  background: #fff;
  border: 2px solid #696969;
  border-width: 2px 1px 1px 2px;
  border-right-color: #e3e3e3;
  border-bottom-color: #e3e3e3;
}

.plan {
  width: 100%;
  height: 100%;
}

.plan path {
  fill: none;
  shape-rendering: crispEdges;
}

.plan text {
  fill: red;
  font: 16px "Liberation Sans", Arial, sans-serif;
}

.red {
  stroke: red;
}

.black {
  stroke: #000;
}

.cyan {
  stroke: cyan;
}

.dashes {
  stroke-dasharray: 5 3;
}

.dots {
  stroke-dasharray: 3 5;
}

.sparse {
  stroke-dasharray: 2 10;
}

/* Bear Int dialog */
.dialog {
  position: absolute;
  left: 18px;
  top: 111px;
  width: 134px;
  border: 1px solid #1883d7;
  background: #f0f0f0;
  box-shadow: 0 3px 16px rgba(0, 0, 0, 0.4);
}

.dialog-title {
  display: flex;
  align-items: center;
  justify-content: space-between;
  height: 37px;
  padding: 0 15px 0 9px;
  background: #fff;
}

.dialog-title svg {
  width: 12px;
  height: 12px;
}

.dialog-body {
  padding: 14px 14px 20px;
  font: 13px "Liberation Sans", Arial, sans-serif;
}

.dialog label {
  display: block;
  height: 18px;
  line-height: 18px;
}

.dialog label.second {
  height: 20px;
  line-height: 24px;
}

.dialog label.tall {
  height: 26px;
  line-height: 28px;
}

.dialog label.half {
  padding-left: 16px;
}

.dialog label.indent {
  padding-left: 21px;
}

.dialog sup {
  line-height: 0;
}

.dialog input {
  display: block;
  width: 102px;
  height: 27px;
  padding: 0 0 5px 1px;
  border: 2px solid #696969;
  border-right-color: #e3e3e3;
  border-bottom-color: #e3e3e3;
  background: #fff;
  font: 12px "Liberation Sans", Arial, sans-serif;
}

.dialog input.wide {
  width: 104px;
}

.dialog-buttons {
  display: flex;
  flex-direction: column;
  gap: 8px;
  width: 86px;
  margin-top: 19px;
}

.dialog-buttons button {
  height: 28px;
  border: 1px solid;
  border-color: #fff #696969 #696969 #fff;
  box-shadow: inset -1px -1px #a0a0a0, inset 1px 1px #e3e3e3;
}

.dialog-buttons .default {
  padding: 2px;
  border-color: #696969;
  box-shadow: inset -2px -2px #8a8a8a, inset 1px 1px #fff;
}

.dialog-buttons .default span {
  display: block;
  border: 1px dotted #000;
  line-height: 18px;
}

/* status line */
.status {
  display: flex;
  align-items: center;
  flex: none;
  height: 30px;
  padding-left: 9px;
  color: #6d6d6d;
}

.hint {
  flex: 1;
}

.progress {
  width: 80px;
  height: 15px;
  margin-right: 5px;
  border: 1px solid #a0a0a0;
  border-right-color: #fff;
  border-bottom-color: #fff;
  background: linear-gradient(#0078d7, #0078d7) left / 2px 100% no-repeat;
}

.status input {
  width: 94px;
  height: 26px;
  margin-right: 9px;
  padding: 0 2px;
  border: 1px solid #a0a0a0;
  background: #f0f0f0;
  color: #000;
  font: inherit;
}

.height {
  width: 112px;
}

.east {
  width: 115px;
}

.north {
  width: 168px;
}

.units {
  width: 225px;
}

/* taskbar */
.taskbar {
  display: flex;
  flex: none;
  height: 50px;
  background: #010409;
  color: #fff;
}

.start {
  width: 60px;
}

.start svg {
  width: 20px;
  margin: auto;
}

.search {
  display: flex;
  align-items: center;
  width: 430px;
  padding: 0 18px 0 11px;
  background: #323232;
}

.cortana {
  width: 28px;
  height: 28px;
}

.search input {
  flex: 1;
  padding: 0 0 0 11px;
  border: none;
  background: none;
  color: #fff;
  font: inherit;
  font-size: 17px;
}

.search input::placeholder {
  color: #a5a5a5;
}

.mic {
  width: 16px;
  height: 20px;
}

.task {
  display: flex;
  align-items: center;
  justify-content: center;
  width: 62px;
  height: 50px;
  position: relative;
}

.task.view {
  width: 63px;
  padding-right: 2px;
}

.task svg {
  width: 30px;
  height: 30px;
}

.task.open::after {
  content: "";
  position: absolute;
  bottom: 0;
  left: 5px;
  right: 5px;
  height: 3px;
  background: #76b9ed;
}

.task.current {
  background: #33363a;
}

.task.current::after {
  left: 0;
  right: 0;
}

.seven {
  font: bold 13px "Open Sans", sans-serif;
  fill: #fff;
}

.zed {
  font: bold 16px "Open Sans", sans-serif;
}

.badge {
  font: 14px "Open Sans", sans-serif;
  fill: #fff;
}

.tray {
  display: flex;
  align-items: center;
  margin-left: auto;
  margin-right: 5px;
  padding-right: 15px;
  border-right: 1px solid #444;
}

.tray svg {
  width: 18px;
  height: 18px;
  margin-right: 10px;
}

.tray .up {
  width: 16px;
  margin-right: 14px;
}

.tray .cloud {
  width: 20px;
}

.tray .volume {
  width: 22px;
  margin-right: 12px;
}

.lang {
  margin-right: 20px;
}

.clock {
  margin-right: 26px;
  line-height: 22px;
  text-align: center;
}

.notices {
  position: relative;
  width: 30px;
}

.notices svg {
  width: 22px;
  height: 22px;
  margin: 0;
}

.notices b {
  position: absolute;
  left: 9px;
  top: 7px;
  width: 21px;
  height: 21px;
  border: 1px solid #777;
  border-radius: 50%;
  background: #222;
  font-size: 13px;
  line-height: 19px;
  text-align: center;
}
```
